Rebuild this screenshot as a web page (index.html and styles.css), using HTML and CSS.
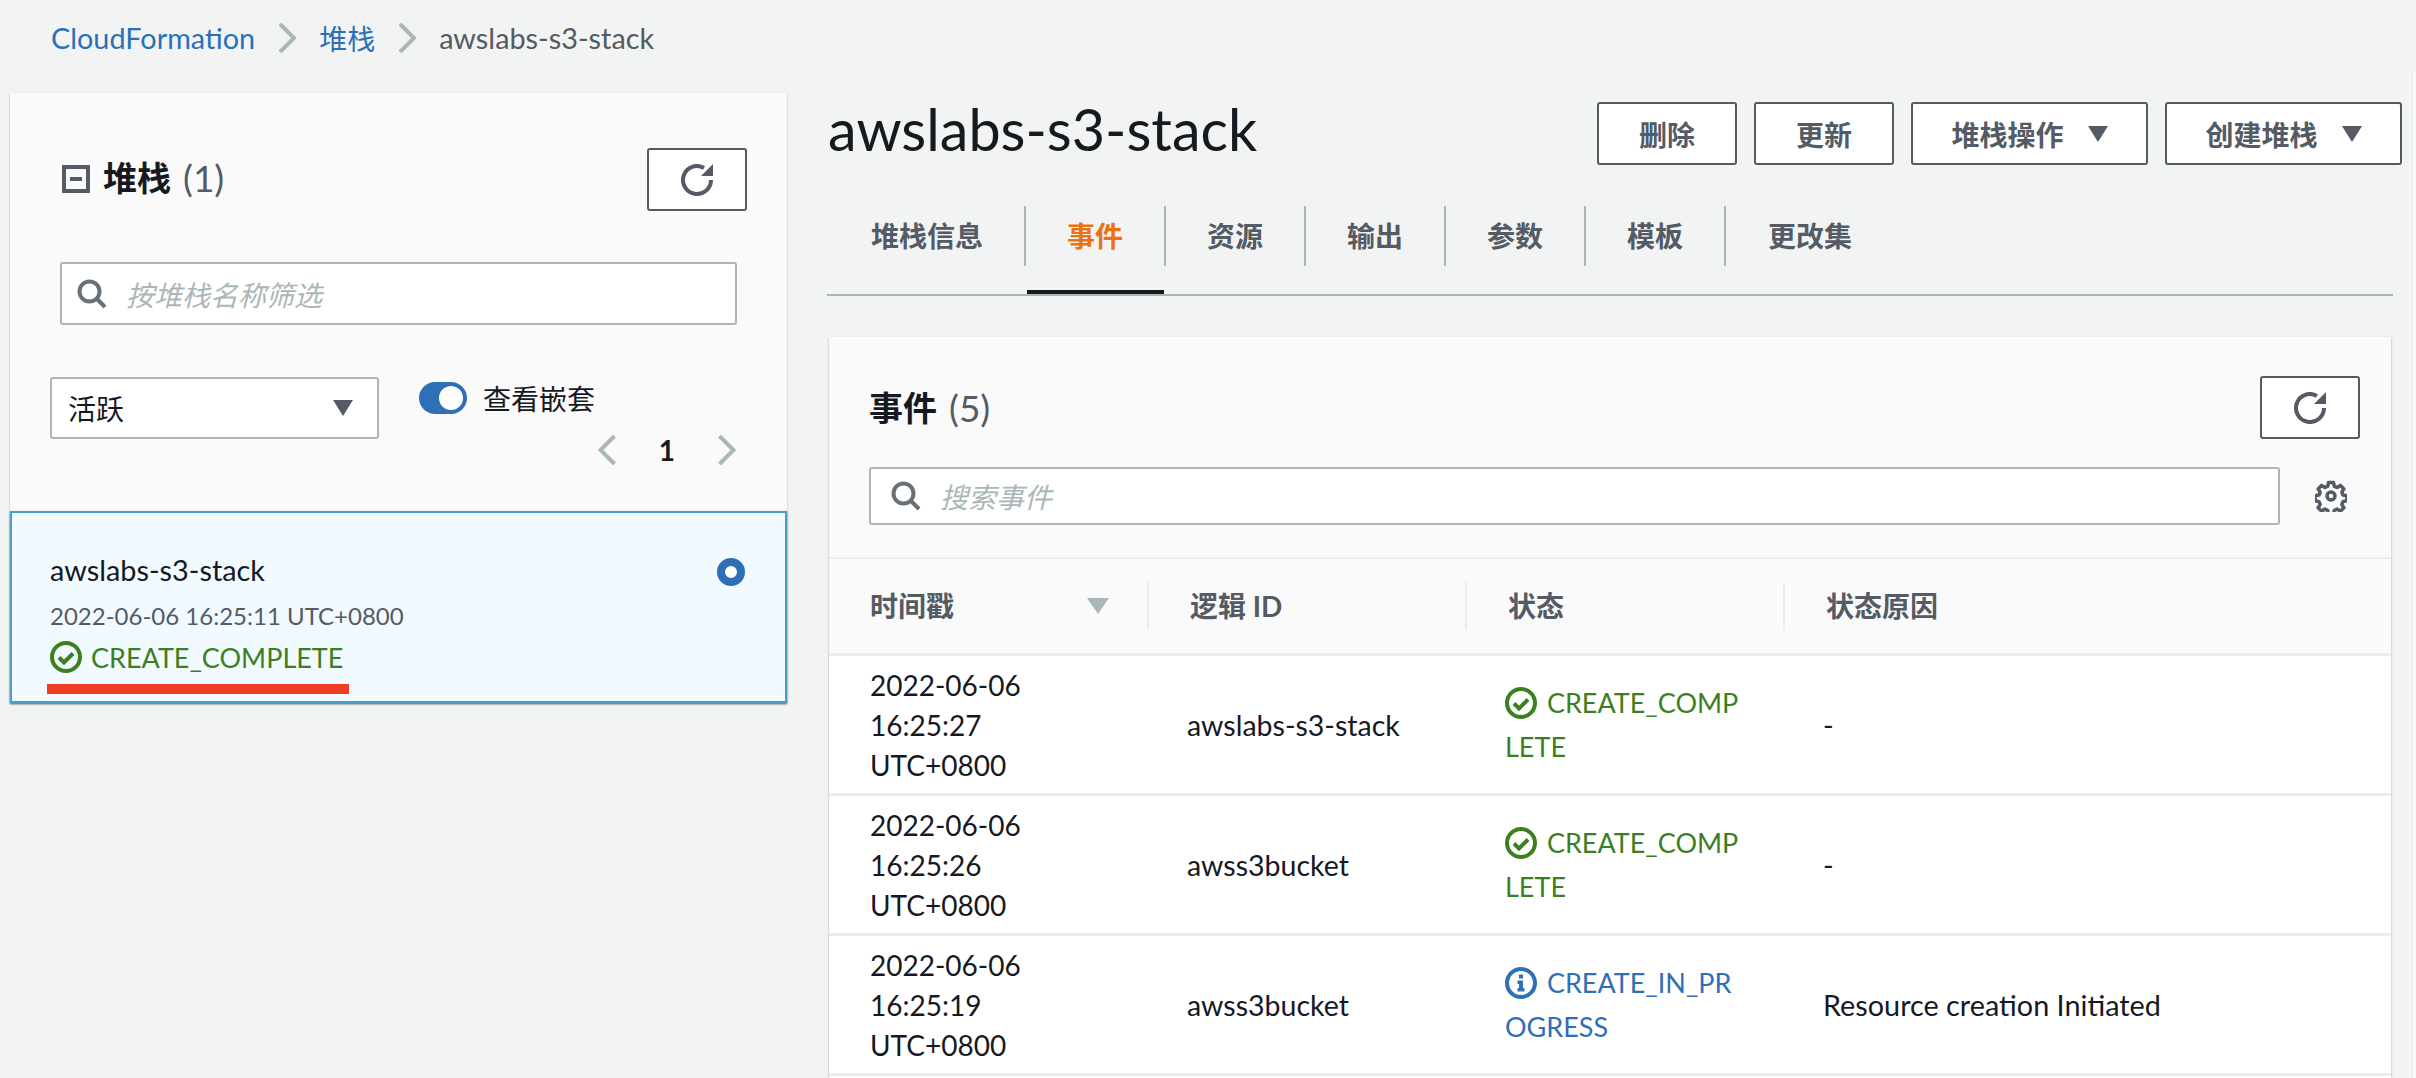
FILE: index.html
```html
<!DOCTYPE html>
<html lang="zh-CN">
<head>
    <meta charset="UTF-8">
    <title>awslabs-s3-stack - CloudFormation</title>
    <link rel="stylesheet" href="styles.css">
</head>
<body>
    <!-- Breadcrumb -->
    <nav class="crumbs">
        <a class="crumb-link">CloudFormation</a>
        <svg class="crumb-sep" viewBox="0 0 18 30"><path d="M2 1l14 14L2 29"/></svg>
        <a class="crumb-link crumb-cjk">堆栈</a>
        <svg class="crumb-sep" viewBox="0 0 18 30"><path d="M2 1l14 14L2 29"/></svg>
        <span class="crumb-current">awslabs-s3-stack</span>
    </nav>

    <div class="layout">
        <!-- Stack list -->
        <aside class="stack-panel">
            <div class="stack-top">
                <div class="panel-head">
                    <h2 class="panel-title">
                        <svg class="collapse-icon" viewBox="0 0 28 28"><rect x="2" y="2" width="24" height="24"/><path d="M8 14h12"/></svg>
                        堆栈 <span class="count">(1)</span>
                    </h2>
                    <button class="icon-btn">
                        <svg viewBox="0 0 32 32"><path d="M30 16A14 14 0 1 1 23 3.900"/><path class="fill" d="M32 0v12H20z"/></svg>
                    </button>
                </div>
                <div class="search stack-search">
                    <svg class="search-icon" viewBox="0 0 30 30"><circle cx="12.500" cy="12.500" r="10"/><path d="M20 20l8 8"/></svg>
                    <span class="placeholder">按堆栈名称筛选</span>
                </div>
                <div class="stack-filters">
                    <div class="select">
                        <span>活跃</span>
                        <i class="arrow"></i>
                    </div>
                    <div class="filter-side">
                        <div class="toggle-row">
                            <span class="toggle"></span>
                            <span>查看嵌套</span>
                        </div>
                        <div class="pager">
                            <svg class="pager-chev" viewBox="0 0 18 30"><path d="M16 1L2 15l14 14"/></svg>
                            <b>1</b>
                            <svg class="pager-chev" viewBox="0 0 18 30"><path d="M2 1l14 14L2 29"/></svg>
                        </div>
                    </div>
                </div>
            </div>
            <div class="stack-item">
                <div class="stack-info">
                    <div class="stack-name">awslabs-s3-stack</div>
                    <div class="stack-date">2022-06-06 16:25:11 UTC+0800</div>
                    <div class="stack-status status-ok">
                        <svg class="status-icon" viewBox="0 0 32 32"><circle cx="16" cy="16" r="14"/><path d="M9 16.500l5 5 9-9"/></svg>
                        CREATE_COMPLETE
                    </div>
                    <div class="red-mark"></div>
                </div>
                <span class="radio"></span>
            </div>
        </aside>

        <!-- Stack detail -->
        <main class="detail">
            <div class="detail-head">
                <h1 class="stack-title">awslabs-s3-stack</h1>
                <div class="actions">
                    <button class="btn btn-del">删除</button>
                    <button class="btn btn-upd">更新</button>
                    <button class="btn btn-drop">堆栈操作 <i class="arrow"></i></button>
                    <button class="btn btn-drop">创建堆栈 <i class="arrow"></i></button>
                </div>
            </div>

            <div class="tabs">
                <div class="tab tab-first">堆栈信息</div>
                <div class="tab tab-active">事件</div>
                <div class="tab">资源</div>
                <div class="tab">输出</div>
                <div class="tab">参数</div>
                <div class="tab">模板</div>
                <div class="tab">更改集</div>
            </div>

            <section class="events">
                <div class="events-top">
                    <div class="panel-head events-head">
                        <h2 class="panel-title">事件 <span class="count">(5)</span></h2>
                        <button class="icon-btn">
                            <svg viewBox="0 0 32 32"><path d="M30 16A14 14 0 1 1 23 3.900"/><path class="fill" d="M32 0v12H20z"/></svg>
                        </button>
                    </div>
                    <div class="events-search">
                        <div class="search">
                            <svg class="search-icon" viewBox="0 0 30 30"><circle cx="12.500" cy="12.500" r="10"/><path d="M20 20l8 8"/></svg>
                            <span class="placeholder">搜索事件</span>
                        </div>
                        <svg class="gear" viewBox="0 0 32 32">
                            <path d="M13.500 2.500h5l.8 3.800 2.800 1.200 3.300-2.100 3.500 3.500-2.100 3.300 1.200 2.800 3.800.8v5l-3.800.8-1.200 2.800 2.100 3.300-3.500 3.500-3.300-2.100-2.800 1.200-.8 3.800h-5l-.8-3.800-2.800-1.200-3.300 2.100-3.500-3.500 2.100-3.300-1.200-2.800-3.800-.8v-5l3.800-.8 1.200-2.800-2.100-3.300 3.500-3.500 3.300 2.100 2.800-1.200z"/>
                            <circle cx="16" cy="16" r="4"/>
                        </svg>
                    </div>
                </div>

                <div class="event-row event-header">
                    <div class="col-time"><span class="th">时间戳<i class="sort-arrow"></i></span></div>
                    <div class="col-id"><span class="th">逻辑 ID</span></div>
                    <div class="col-status"><span class="th">状态</span></div>
                    <div class="col-reason"><span class="th th-last">状态原因</span></div>
                </div>

                <div class="event-row">
                    <div class="col-time">2022-06-06<br>16:25:27<br>UTC+0800</div>
                    <div class="col-id">awslabs-s3-stack</div>
                    <div class="col-status status-ok">
                        <svg class="status-icon" viewBox="0 0 32 32"><circle cx="16" cy="16" r="14"/><path d="M9 16.500l5 5 9-9"/></svg>
                        CREATE_COMP<br>LETE
                    </div>
                    <div class="col-reason">-</div>
                </div>
                <div class="event-row">
                    <div class="col-time">2022-06-06<br>16:25:26<br>UTC+0800</div>
                    <div class="col-id">awss3bucket</div>
                    <div class="col-status status-ok">
                        <svg class="status-icon" viewBox="0 0 32 32"><circle cx="16" cy="16" r="14"/><path d="M9 16.500l5 5 9-9"/></svg>
                        CREATE_COMP<br>LETE
                    </div>
                    <div class="col-reason">-</div>
                </div>
                <div class="event-row">
                    <div class="col-time">2022-06-06<br>16:25:19<br>UTC+0800</div>
                    <div class="col-id">awss3bucket</div>
                    <div class="col-status status-info">
                        <svg class="status-icon" viewBox="0 0 32 32"><circle cx="16" cy="16" r="14"/><path class="fill" d="M14 7.500h4v4h-4zM12.500 13.500H18V21h1.500v3.500h-7V21H14v-4h-1.500z"/></svg>
                        CREATE_IN_PR<br>OGRESS
                    </div>
                    <div class="col-reason">Resource creation Initiated</div>
                </div>
            </section>
        </main>
    </div>
    <div class="edge-strip"></div>
</body>
</html>
```

FILE: styles.css
```css
* { box-sizing: border-box; }
html, body { height: 100%; }
body {
    margin: 0;
    height: 1078px;
    overflow: hidden;
    background: #f2f3f3;
    color: #16191f;
    font-family: Lato, "Noto Sans CJK SC", sans-serif;
    font-size: 28px;
}
h1, h2 { margin: 0; }
button { font-family: inherit; cursor: pointer; }

/* breadcrumb */
.crumbs { display: flex; align-items: center; height: 76px; padding: 0 0 0 51px; gap: 23px; font-size: 28.800px; }
.crumb-link { color: #2a6fb8; }
.crumb-cjk { font-size: 28px; }
.crumb-current { color: #545b64; }
.crumb-sep { width: 18px; height: 30px; fill: none; stroke: #aab7b8; stroke-width: 4; }

.layout { display: flex; align-items: flex-start; padding: 17px 14px 0 10px; }
.edge-strip { position: absolute; top: 72px; right: 0; bottom: 0; width: 4px; background: #f9f9f9; border-left: 1px solid #e8eaea; }

/* left panel */
.stack-panel { width: 777px; flex: none; background: #fafafa; box-shadow: 0 1px 2px rgba(0, 28, 36, .3); }
.stack-top { padding: 55px 40px 0 40px; height: 418px; }
.panel-head { display: flex; justify-content: space-between; align-items: center; }
.panel-title { display: flex; align-items: center; font-size: 34px; font-weight: 700; line-height: 63px; }
.stack-top .panel-title { margin-top: -5px; }
.count { color: #545b64; font-weight: 400; margin-left: 12px; font-size: 37px; }
.collapse-icon { width: 28px; height: 28px; margin: 3px 13px 0 12px; fill: none; stroke: #545b64; stroke-width: 4; }
.icon-btn { width: 100px; height: 63px; padding: 0; background: #fff; border: 2px solid #545b64; border-radius: 3px; display: flex; align-items: center; justify-content: center; }
.icon-btn svg { width: 32px; height: 32px; fill: none; stroke: #545b64; stroke-width: 4; }
.icon-btn .fill { fill: #545b64; stroke: none; }
.stack-search { margin: 51px 10px 0 10px; }
.search { display: flex; align-items: center; height: 63px; padding-left: 15px; background: #fff; border: 2px solid #aab7b8; border-radius: 3px; }
.search-icon { width: 30px; height: 30px; flex: none; fill: none; stroke: #687078; stroke-width: 4; }
.placeholder { margin-left: 19px; color: #aab7b8; font-style: italic; }
.stack-filters { display: flex; margin-top: 52px; }
.select { display: flex; justify-content: space-between; align-items: center; width: 329px; height: 62px; padding: 0 24px 0 16px; background: #fff; border: 2px solid #aab7b8; border-radius: 3px; }
.arrow { display: inline-block; width: 0; height: 0; border-left: 10px solid transparent; border-right: 10px solid transparent; border-top: 16px solid #545b64; }
.filter-side { margin-left: 40px; flex: 1; }
.toggle-row { display: flex; align-items: center; gap: 16px; height: 32px; margin-top: 5px; }
.toggle { position: relative; width: 48px; height: 32px; border-radius: 16px; background: #2f6fb7; }
.toggle::after { content: ""; position: absolute; right: 4px; top: 4px; width: 24px; height: 24px; border-radius: 50%; background: #fff; }
.pager { display: flex; justify-content: flex-end; align-items: center; margin: 21px 11px 0 0; gap: 42px; height: 30px; }
.pager b { font-weight: 700; }
.pager-chev { width: 19px; height: 30px; fill: none; stroke: #aab7b8; stroke-width: 4; }

.stack-item { display: flex; justify-content: space-between; height: 192px; padding: 0 40px 0 38px; background: #f1faff; border: 2px solid #44a0c8; box-shadow: 0 1px 2px rgba(0, 28, 36, .5); }
.stack-name { margin-top: 37px; line-height: 40px; font-size: 28.800px; }
.stack-date { margin-top: 6px; line-height: 40px; font-size: 24px; color: #545b64; }
.stack-status { display: flex; align-items: center; gap: 9px; height: 40px; margin-top: 1px; font-size: 27px; }
.status-ok { color: #3c7f1f; }
.status-info { color: #2f6fb7; }
.status-icon { width: 32px; height: 32px; fill: none; stroke: currentColor; stroke-width: 4; }
.status-icon .fill { fill: currentColor; stroke: none; }
.red-mark { width: 302px; height: 10px; margin: 7px 0 0 -3px; background: #ee3f24; }
.radio { width: 28px; height: 28px; margin-top: 45px; border-radius: 50%; border: 8px solid #2f6fb7; background: #fff; }

/* right side */
.detail { flex: 1; margin-left: 40px; }
.detail-head { display: flex; justify-content: space-between; align-items: center; height: 63px; margin-top: 9px; }
.stack-title { font-size: 57.500px; font-weight: 400; line-height: 63px; margin: -10px 0 0 1px; }
.actions { display: flex; gap: 17px; }
.btn { height: 63px; padding: 0; background: #fff; border: 2px solid #545b64; border-radius: 3px; color: #545b64; font-size: 28px; font-weight: 700; display: flex; align-items: center; justify-content: center; }
.btn-del, .btn-upd { width: 140px; }
.btn-drop { width: 237px; gap: 24px; }

.tabs { display: flex; margin-top: 41px; height: 90px; border-bottom: 2px solid #aab7b8; width: 1566px; }
.tab { position: relative; height: 60px; width: 140px; line-height: 60px; text-align: center; color: #545b64; font-weight: 700; border-left: 2px solid #aab7b8; }
.tab-first { width: 197px; border-left: 0; padding-left: 44px; text-align: left; }
.tab:last-child { width: 170px; }
.tab-active { color: #ec7211; }
.tab-active::after { content: ""; position: absolute; left: 1px; right: 0; top: 84px; height: 4px; background: #16191f; }

.events { margin: 41px 0 0 2px; width: 1562px; height: 760px; background: #fff; box-shadow: 0 1px 2px rgba(0, 28, 36, .35); }
.events-top { height: 220px; padding: 39px 31px 0 40px; background: #fafafa; }
.events-head { height: 63px; }
.events-search { display: flex; align-items: center; margin-top: 28px; }
.events-search .search { width: 1411px; height: 58px; padding-left: 20px; }
.gear { width: 32px; height: 32px; margin-left: 35px; fill: none; stroke: #545b64; stroke-width: 3.500; stroke-linejoin: round; }

/* event table */
.event-row { display: flex; align-items: center; height: 140px; border-bottom: 3px solid #eaeded; line-height: 40px; }
.col-time { width: 320px; padding-left: 41px; }
.col-id { width: 318px; padding-left: 38px; font-size: 28.500px; }
.col-status { width: 318px; padding-left: 38px; line-height: 44px; font-size: 27px; }
.col-status .status-icon { vertical-align: -6px; margin-right: 3px; }
.col-reason { flex: 1; padding-left: 38px; font-size: 28.800px; }
.event-header { height: 99px; background: #fafafa; border-top: 2px solid #eaeded; color: #545b64; font-weight: 700; }
.event-header > div { padding-left: 0; font-size: 28px; }
.th { display: flex; align-items: center; height: 48px; padding-left: 41px; line-height: 48px; border-right: 2px solid #eaeded; }
.th-last { border-right: 0; }
.sort-arrow { width: 0; height: 0; margin-left: 133px; border-left: 11px solid transparent; border-right: 11px solid transparent; border-top: 16px solid #aab7b8; }
```
